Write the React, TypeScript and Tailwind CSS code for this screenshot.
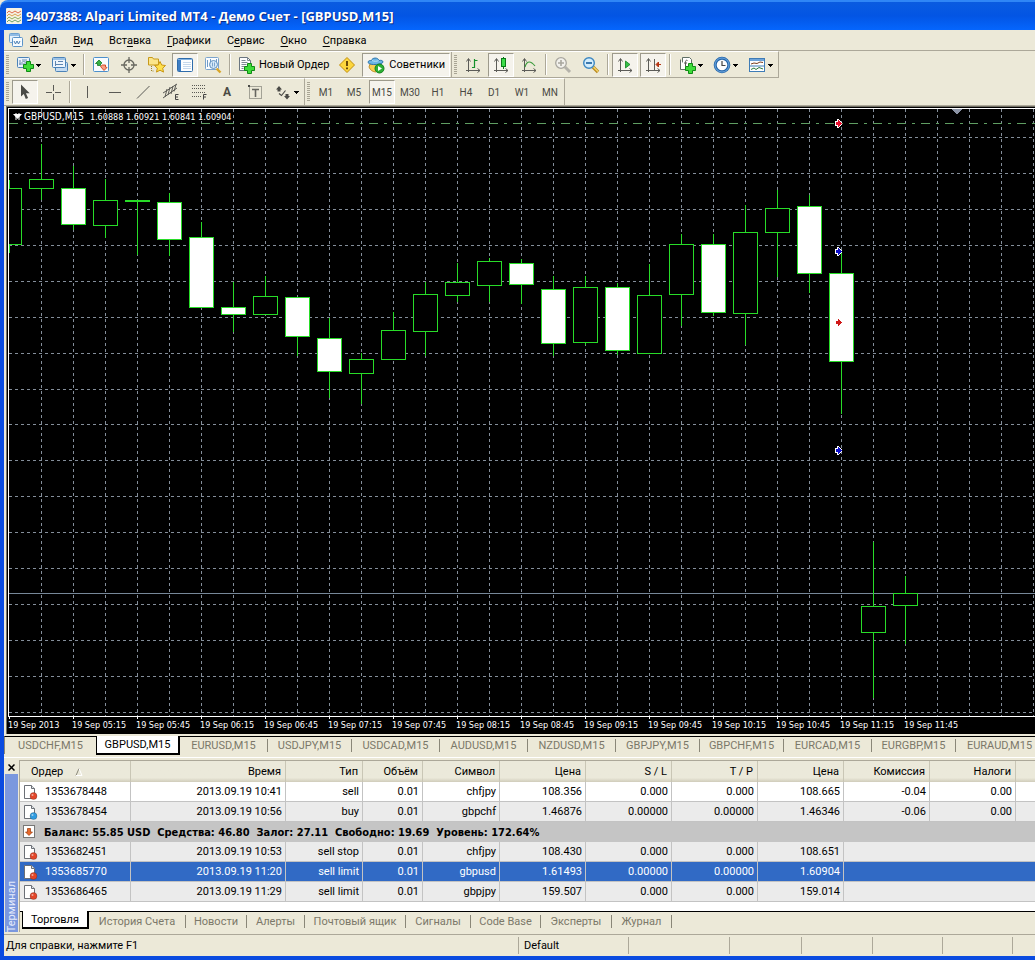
import React from "react";

type Kids = { children?: React.ReactNode };

/* ---------- small building blocks ---------- */

function Glyph({ children, w = 18 }: Kids & { w?: number }) {
  return (
    <svg width={w} height={18} viewBox={`0 0 ${w} 18`} aria-hidden="true" className="shrink-0">
      {children}
    </svg>
  );
}

function Caret() {
  return (
    <svg width={6} height={18} viewBox="0 0 6 18" aria-hidden="true" className="shrink-0" shapeRendering="crispEdges">
      <path d="M0 8h5v1h-1v1h-1v1h-1v-1h-1v-1h-1z" fill="#000" />
    </svg>
  );
}

function Sep() {
  return (
    <span className="flex w-1.5 shrink-0 justify-center self-stretch py-0.5">
      <span className="w-px bg-[#aca899]" />
      <span className="w-px bg-white" />
    </span>
  );
}

function Grip() {
  return (
    <svg width={7} height={20} className="shrink-0" aria-hidden="true" shapeRendering="crispEdges">
      {Array.from({ length: 10 }, (_, i) => (
        <rect key={i} x={2} y={i * 2} width={3} height={1} fill="#a9a594" />
      ))}
    </svg>
  );
}

function Tool({
  label,
  children,
  pressed,
  wide,
  drop,
}: Kids & { label: string; pressed?: boolean; wide?: boolean; drop?: boolean }) {
  const face = pressed
    ? "border-t-[#9d9a8c] border-l-[#9d9a8c] border-r-white border-b-white bg-[#f5f3ec]"
    : "border-transparent";
  const pad = pressed ? "px-1 gap-1" : "px-0.5 gap-1";
  const size = wide ? pad : drop ? "w-[33px] gap-0.5" : "w-[26px]";
  return (
    <button
      aria-label={label}
      className={`mx-px flex h-6 shrink-0 items-center justify-center border ${face} ${size}`}
    >
      {children}
      {drop && <Caret />}
    </button>
  );
}

const Plus = ({ x, y }: { x: number; y: number }) => (
  <path
    d={`M${x + 3} ${y}h4v3h3v4h-3v3h-4v-3h-3v-4h3z`}
    fill="#3fdc3a"
    stroke="#0f8a14"
    strokeWidth={1}
    transform="translate(.5 .5)"
  />
);

/* ---------- toolbar icons ---------- */

const IconNewChart = () => (
  <Glyph>
    <rect x="1.5" y="1.500" width="12" height="10" rx="1" fill="#eaf3fc" stroke="#4c83b8" />
    <path d="M4 4v5M3 8h8M6 4h5M5.500 6.500l2-1 3 1" stroke="#6c8db0" fill="none" />
    <Plus x={7} y={5} />
  </Glyph>
);
const IconProfiles = () => (
  <Glyph>
    <rect x="4.500" y="6.500" width="12" height="9" rx="1" fill="#c5dcf2" stroke="#4c83b8" />
    <rect x="1.500" y="1.500" width="13" height="10" rx="1" fill="#eef5fc" stroke="#4c83b8" />
    <path d="M2 3h12" stroke="#9cc2e6" strokeWidth="2" />
    <path d="M4.500 5v5M4 8.500h8M7 5.500h5" stroke="#5f86b0" fill="none" />
  </Glyph>
);
const IconMarket = () => (
  <Glyph>
    <rect x="1.500" y="1.500" width="15" height="14" rx="1" fill="#f8fcff" stroke="#4c90cc" />
    <path d="M3.500 7.500l3.500-3.500 3 3-1.500 1v1.500h-3v-2z" fill="#35b045" stroke="#127a22" strokeWidth=".8" />
    <path d="M8.500 10.500l2-1.500h3v2l1.500.5-3 3z" fill="#f7a184" stroke="#d0401d" strokeWidth=".9" />
  </Glyph>
);
const IconTarget = () => (
  <Glyph>
    <circle cx="9" cy="9" r="5" fill="none" stroke="#686860" strokeWidth="1.300" />
    <path d="M9 1v6M9 11v6M1 9h6M11 9h6" stroke="#686860" strokeWidth="1.300" />
  </Glyph>
);
const IconFavorites = () => (
  <Glyph>
    <path d="M.5 1.500h4l1 1.500h5v6h-10z" fill="#fbe58a" stroke="#c79a1c" />
    <path d="M3.500 10v5h3" stroke="#a08428" strokeDasharray="1 1" fill="none" />
    <path d="M12 5.500l1.700 3.500 3.800.5-2.800 2.700.8 3.900-3.500-1.900-3.500 1.900.8-3.900-2.800-2.700 3.800-.5z" fill="#ffe14d" stroke="#c99612" />
  </Glyph>
);
const IconNavigator = () => (
  <Glyph>
    <rect x="1.500" y="2.500" width="15" height="13" rx="1" fill="#fdfeff" stroke="#2f6cab" />
    <path d="M2 3.500h14" stroke="#86b4e2" />
    <rect x="2" y="4" width="3" height="11" fill="#3f7ec4" />
    <path d="M7 6.500h8M7 8.500h8M7 10.500h8M7 12.500h8" stroke="#c6d8ec" />
  </Glyph>
);
const IconTester = () => (
  <Glyph>
    <rect x="1.500" y="1.500" width="13" height="12" rx="1" fill="#fbfdff" stroke="#7ba4cc" />
    <path d="M3.500 4v7M6.500 3v7M12.500 3v4" stroke="#6f9bc8" />
    <path d="M12.500 12.500l4 4" stroke="#d8a528" strokeWidth="2.400" />
    <circle cx="9.500" cy="8.500" r="4" fill="#cfe6f8" fillOpacity=".85" stroke="#5f8fbd" />
    <path d="M8.500 6.500v4M10.500 6.500v4" stroke="#7ba4cc" />
  </Glyph>
);
const IconOrder = () => (
  <Glyph>
    <path d="M2.500 1.500h8l3 3v10h-11z" fill="#fdfdfd" stroke="#6b7680" />
    <path d="M10.500 1.500v3h3M4.500 4.500h4M4.500 6.500h6M4.500 8.500h5M4.500 10.500h3M4.500 12.500h2" stroke="#7f8a94" fill="none" />
    <Plus x={7} y={7} />
  </Glyph>
);
const IconWarning = () => (
  <Glyph>
    <path d="M9 1.500l7.500 7.500-7.500 7.500-7.500-7.500z" fill="#fcd63c" stroke="#c18e0c" strokeLinejoin="round" />
    <path d="M9 5v5M9 11.500v1.800" stroke="#5a3a00" strokeWidth="1.800" />
  </Glyph>
);
const IconExperts = () => (
  <Glyph>
    <path d="M3 8l-1 3c1 3 4 5 7 5l5-6-2-3z" fill="#f8cf52" stroke="#c3922c" />
    <path d="M1 6.500c0-2 2-2 3.500-2C5 1.500 11 1 12 4.500c2-.5 4 0 4 1.500 0 2.500-13 4-15 .5z" fill="#6bb5e6" stroke="#2c74ac" />
    <path d="M5 4.500c2 1 5 1 6.500 0" stroke="#b8e0f8" fill="none" />
    <circle cx="12.500" cy="12.500" r="4.500" fill="#2cb034" stroke="#12801c" />
    <path d="M11 10l4 2.500-4 2.500z" fill="#fff" />
  </Glyph>
);
const Axes = () => (
  <path d="M4.500 3v13M2.500 5.500l2-3 2 3M2 14.500h14M13.500 12.500l2.500 2-2.500 2" stroke="#5c5c58" fill="none" />
);
const IconBars = () => (
  <Glyph>
    <Axes />
    <path d="M10.500 3v9M8 11.500h2.500M10.500 4.500h3" stroke="#14902a" strokeWidth="1.200" fill="none" />
  </Glyph>
);
const IconCandles = () => (
  <Glyph>
    <Axes />
    <path d="M11.500 1v12" stroke="#0a7a18" />
    <rect x="9.500" y="2.500" width="4" height="8" fill="#3ddc4a" stroke="#0a7a18" />
  </Glyph>
);
const IconLine = () => (
  <Glyph>
    <Axes />
    <path d="M5 11c2-7 6-6 10-1" stroke="#3a9a3a" strokeWidth="1.200" fill="none" />
  </Glyph>
);
const IconZoomIn = () => (
  <Glyph>
    <path d="M11 11l5 5" stroke="#b4b2aa" strokeWidth="3" />
    <circle cx="7" cy="7" r="5.300" fill="#f2f1ec" stroke="#a9a79f" strokeWidth="1.300" />
    <path d="M4 7h6M7 4v6" stroke="#a9a79f" strokeWidth="1.600" />
  </Glyph>
);
const IconZoomOut = () => (
  <Glyph>
    <path d="M11 11l5 5" stroke="#b98a20" strokeWidth="3.400" />
    <path d="M11.500 11l4.500 4.500" stroke="#f5d468" strokeWidth="1.600" />
    <circle cx="7" cy="7" r="5.300" fill="#d3edfc" stroke="#3d87c0" strokeWidth="1.400" />
    <path d="M4 7h6" stroke="#2a6ca6" strokeWidth="1.800" />
  </Glyph>
);
const IconScroll = () => (
  <Glyph>
    <Axes />
    <path d="M9.500 5l4.500 3.500-4.500 3.500z" fill="#35c046" stroke="#128020" strokeWidth=".8" />
  </Glyph>
);
const IconShift = () => (
  <Glyph>
    <Axes />
    <path d="M10.500 3v11" stroke="#5c5c58" />
    <path d="M17 8.500h-4M14.500 6l-2.500 2.500 2.500 2.500z" stroke="#b63412" fill="#b63412" />
  </Glyph>
);
const IconIndicators = () => (
  <Glyph>
    <path d="M4.500 1.500h7l2 2v8h-9z" fill="#fff" stroke="#5f6f66" />
    <path d="M2.500 3.500v10h7" fill="#fff" stroke="#5f6f66" />
    <path d="M9.500 4.500c-2-1-2 1-2 2v4M6 7h3" stroke="#555" fill="none" />
    <Plus x={7} y={7} />
  </Glyph>
);
const IconPeriods = () => (
  <Glyph>
    <circle cx="9" cy="9" r="6.800" fill="#fdfdfd" stroke="#2768ac" strokeWidth="3" />
    <circle cx="9" cy="9" r="7" fill="none" stroke="#7fb6ea" strokeWidth=".8" />
    <path d="M9 5v4.500h3.500" stroke="#444" fill="none" strokeWidth="1.200" />
  </Glyph>
);
const IconTemplates = () => (
  <Glyph>
    <rect x="1.500" y="2.500" width="15" height="13" fill="#fff" stroke="#3f7cb6" />
    <path d="M2 4h14" stroke="#6ea4da" strokeWidth="2" />
    <path d="M2 10h14" stroke="#3f7cb6" />
    <path d="M3 8l3-1 3 .5 3-1.500 3 .5" stroke="#7a3e20" fill="none" />
    <path d="M3 13.500l3-1.500 2 1.500 3-2 4 1.500" stroke="#2d7a3c" fill="none" />
  </Glyph>
);

const IconCursor = () => (
  <Glyph>
    <path d="M5 1.500v12l2.800-2.500 2 5 2.300-1-2.200-4.700h3.800z" fill="#4a4a46" />
  </Glyph>
);
const IconCross = () => (
  <Glyph>
    <path d="M9.500 2v6M9.500 11v6M2 9.500h6M11 9.500h6" stroke="#5a5a55" />
  </Glyph>
);
const IconV = () => (
  <Glyph>
    <path d="M9.500 3v12" stroke="#5a5a55" />
  </Glyph>
);
const IconH = () => (
  <Glyph>
    <path d="M3 9.500h12" stroke="#5a5a55" />
  </Glyph>
);
const IconTrend = () => (
  <Glyph>
    <path d="M3 15.500L15.500 3" stroke="#5a5a55" />
  </Glyph>
);
const IconChannel = () => (
  <Glyph>
    <path d="M1 10L15 1M1 15L15 5M5 6l-2 8M8 4l-2 8M11 3l-2 8M14 1.500l-2 7" stroke="#5a5a55" />
    <path d="M16.500 11.500h-3v5h3M13.500 14h2.500" stroke="#444" fill="none" />
  </Glyph>
);
const IconFibo = () => (
  <Glyph>
    <path d="M2 2.500h14M2 5.500h14M2 9.500h14M2 13.500h10" stroke="#5a5a55" strokeDasharray="1 1" />
    <path d="M16.500 11.500h-3v5M13.500 14h2.500" stroke="#444" fill="none" />
  </Glyph>
);
const IconLabel = () => (
  <Glyph>
    <rect x="3.500" y="3.500" width="12" height="12" fill="none" stroke="#5a5a55" strokeDasharray="1 1" />
    <rect x="2" y="2" width="2" height="2" fill="#4a4a46" />
    <path d="M6 6.500h7M9.500 6v8" stroke="#66665f" strokeWidth="1.600" />
  </Glyph>
);
const IconArrows = () => (
  <Glyph>
    <path d="M5 3l3 3.500h-1.500v2h-3v-2h-1.500z" fill="#4a4a46" />
    <path d="M13 16.500l-3-3.500h1.500v-2h3v2h1.500z" fill="#4a4a46" />
    <path d="M5 10.500l2.500 2 4-5" stroke="#4a4a46" strokeWidth="1.200" fill="none" />
  </Glyph>
);

/* ---------- price chart ---------- */

type Candle = [x: number, high: number, top: number, bottom: number, low: number, filled: 0 | 1];

const candles: Candle[] = [
  [9, 180, 188, 244, 253, 0],
  [41, 144, 179, 188, 200, 0],
  [73, 166, 188, 224, 230, 1],
  [105, 179, 200, 225, 238, 0],
  [137, 200, 200, 201, 255, 0],
  [169, 193, 202, 239, 256, 1],
  [201, 222, 237, 307, 307, 1],
  [233, 282, 307, 314, 332, 1],
  [265, 276, 296, 314, 314, 0],
  [297, 297, 297, 336, 356, 1],
  [329, 318, 338, 371, 398, 1],
  [361, 353, 359, 373, 404, 0],
  [393, 312, 330, 359, 359, 0],
  [425, 282, 294, 331, 356, 0],
  [457, 263, 282, 295, 302, 0],
  [489, 258, 261, 285, 302, 0],
  [521, 259, 263, 284, 304, 1],
  [553, 276, 289, 343, 356, 1],
  [585, 276, 287, 342, 345, 0],
  [617, 283, 287, 350, 355, 1],
  [649, 264, 295, 353, 353, 0],
  [681, 234, 244, 294, 326, 0],
  [713, 234, 244, 312, 316, 1],
  [745, 205, 232, 313, 345, 0],
  [777, 190, 208, 232, 277, 0],
  [809, 195, 206, 273, 293, 1],
  [841, 250, 273, 361, 414, 1],
  [873, 542, 606, 632, 698, 0],
  [905, 576, 593, 605, 644, 0],
];

const gridY = [137, 173, 209, 245, 281, 317, 353, 389, 424, 460, 496, 532, 568, 604, 640, 676, 712];
const gridX = Array.from({ length: 80 }, (_, i) => 41 + i * 32);

function Marker({ x, y, color }: { x: number; y: number; color: string }) {
  return (
    <g transform={`translate(${x} ${y})`}>
      <path d="M-3 -2h2v-2h2v1h1v1h1v1h1v3h-1v1h-1v1h-1v1h-2v-2h-2z" fill="#fff" />
      <path d="M-2 -1h2v-2h1v1h1v1h1v1h1v1h-1v1h-1v1h-1v1h-1v-2h-2z" fill={color} />
    </g>
  );
}

function Chart() {
  return (
    <svg width="100%" height={607} className="block" role="img" aria-label="GBPUSD M15">
      <g transform="translate(-9 -109)" shapeRendering="crispEdges">
        {gridY.map((y) => (
          <line key={y} x1={9} x2={2600} y1={y + 0.5} y2={y + 0.5} stroke="#848e9a" strokeDasharray="3 3" />
        ))}
        {gridX.map((x) => (
          <line key={x} x1={x + 0.5} x2={x + 0.5} y1={109} y2={716} stroke="#848e9a" strokeDasharray="3 3" />
        ))}
        <line x1={9} x2={2600} y1={123.5} y2={123.5} stroke="#5f9e62" strokeDasharray="9 6 3 6" />
        <line x1={9} x2={2600} y1={593.5} y2={593.5} stroke="#778899" />
        {candles.map(([x, hi, top, bot, lo, filled]) => (
          <g key={x} fill="#28dc28">
            <rect x={x} y={hi} width={1} height={lo - hi} />
            <rect x={x - 12} y={top} width={25} height={bot - top + 1} />
            {bot - top > 1 && (
              <rect x={x - 11} y={top + 1} width={23} height={bot - top - 1} fill={filled ? "#fff" : "#000"} />
            )}
          </g>
        ))}
        <path d="M951 109h11l-5.500 5.500z" fill="#8b93a5" />
        <Marker x={838} y={123} color="#e8102e" />
        <Marker x={838} y={251} color="#1010c8" />
        <Marker x={838} y={322} color="#d01818" />
        <Marker x={838} y={450} color="#1010c8" />
      </g>
    </svg>
  );
}

const times = [
  "19 Sep 2013", "19 Sep 05:15", "19 Sep 05:45", "19 Sep 06:15", "19 Sep 06:45",
  "19 Sep 07:15", "19 Sep 07:45", "19 Sep 08:15", "19 Sep 08:45", "19 Sep 09:15",
  "19 Sep 09:45", "19 Sep 10:15", "19 Sep 10:45", "19 Sep 11:15", "19 Sep 11:45",
];

/* ---------- terminal data ---------- */

type Order = { id: string; color: string; tone: string; cells: string[] };

const openOrders: Order[] = [
  { id: "1353678448", color: "#e2472a", tone: "bg-white", cells: ["2013.09.19 10:41", "sell", "0.01", "chfjpy", "108.356", "0.000", "0.000", "108.665", "-0.04", "0.00"] },
  { id: "1353678454", color: "#2f9be0", tone: "bg-[#ebebeb]", cells: ["2013.09.19 10:56", "buy", "0.01", "gbpchf", "1.46876", "0.00000", "0.00000", "1.46346", "-0.06", "0.00"] },
];
const pendingOrders: Order[] = [
  { id: "1353682451", color: "#e2472a", tone: "bg-[#ebebeb]", cells: ["2013.09.19 10:53", "sell stop", "0.01", "chfjpy", "108.430", "0.000", "0.000", "108.651"] },
  { id: "1353685770", color: "#e2472a", tone: "bg-[#316ac5] text-white", cells: ["2013.09.19 11:20", "sell limit", "0.01", "gbpusd", "1.61493", "0.00000", "0.00000", "1.60904"] },
  { id: "1353686465", color: "#e2472a", tone: "bg-[#ebebeb]", cells: ["2013.09.19 11:29", "sell limit", "0.01", "gbpjpy", "159.507", "0.000", "0.000", "159.014"] },
];
const headers = ["Время", "Тип", "Объём", "Символ", "Цена", "S / L", "T / P", "Цена", "Комиссия", "Налоги"];

function OrderRow({ order }: { order: Order }) {
  const rest = 11 - order.cells.length;
  return (
    <tr className={`h-5 ${order.tone}`}>
      <td className="border-r border-b border-[#c3c3c3] p-0">
        <span className="flex items-center gap-[7px] pl-[3px]">
          <svg width={15} height={16} viewBox="0 0 15 16" aria-hidden="true">
            <path d="M1.500 1.500h7l3 3v10h-10z" fill="#fff" stroke="#6b6f76" />
            <path d="M8.500 1.500v3h3" fill="#dfe3e8" stroke="#6b6f76" />
            <circle cx="10.500" cy="12" r="3.500" fill={order.color} stroke="#00000055" strokeWidth=".6" />
            <circle cx="9.500" cy="11" r="1" fill="#ffffff88" />
          </svg>
          {order.id}
        </span>
      </td>
      {order.cells.map((c, i) => (
        <td key={i} className="border-r border-b border-[#c3c3c3] py-0 pr-[3px] pl-0 text-right">
          {c}
        </td>
      ))}
      <td colSpan={rest} className="border-b border-[#c3c3c3] p-0" />
    </tr>
  );
}

/* ---------- static lists ---------- */

const menu: [string, string, string][] = [
  ["", "Ф", "айл"],
  ["", "В", "ид"],
  ["Вст", "а", "вка"],
  ["", "Г", "рафики"],
  ["С", "е", "рвис"],
  ["", "О", "кно"],
  ["", "С", "правка"],
];
const frames = ["M1", "M5", "M15", "M30", "H1", "H4", "D1", "W1", "MN"];
const chartTabs: [string, string][] = [
  ["EURUSD,M15", "w-[88px]"],
  ["USDJPY,M15", "w-[84px]"],
  ["USDCAD,M15", "w-[88px]"],
  ["AUDUSD,M15", "w-[88px]"],
  ["NZDUSD,M15", "w-[88px]"],
  ["GBPJPY,M15", "w-[84px]"],
  ["GBPCHF,M15", "w-[84px]"],
  ["EURCAD,M15", "w-[88px]"],
  ["EURGBP,M15", "w-[84px]"],
  ["EURAUD,M15", "w-[88px]"],
];
const terminalTabs: [string, string][] = [
  ["История Счета", "w-[97px]"],
  ["Новости", "w-[61px]"],
  ["Алерты", "w-[58px]"],
  ["Почтовый ящик", "w-[101px]"],
  ["Сигналы", "w-[65px]"],
  ["Code Base", "w-[70px]"],
  ["Эксперты", "w-[71px]"],
  ["Журнал", "w-[60px]"],
];

function Tab({ text, width }: { text: string; width: string }) {
  return (
    <button className={`flex h-[17px] shrink-0 items-center justify-center whitespace-nowrap text-[#7b7869] ${width}`}>
      <span className="flex-1 text-center">{text}</span>
      <span className="h-[13px] w-px bg-[#8a8778]" />
    </button>
  );
}

export default function App() {
  return (
    <div className="flex min-h-screen flex-col overflow-hidden bg-[#ece9d8] text-[11px] leading-[13px] text-black [font-family:Roboto,'DejaVu_Sans_Condensed',sans-serif]">
      <header className="flex h-[30px] items-center gap-1 rounded-tl-lg border-t-2 border-[#2f86f6] bg-linear-to-b from-[#0a5be0] via-[#0355e4] to-[#0566fe] pl-1.5">
        <svg width={16} height={16} viewBox="0 0 16 16" aria-hidden="true">
          <rect width="16" height="16" rx="1" fill="#f6f2e4" />
          <path d="M1 5l2-2 3 2 3-2 3 2 3-2" stroke="#e06a4a" fill="none" />
          <path d="M1 8l2-2 3 2 3-2 3 2 3-2" stroke="#d8a050" fill="none" />
          <path d="M1 11l2-2 3 2 3-2 3 2 3-2" stroke="#8cae5c" fill="none" />
          <path d="M1 14l2-2 3 2 3-2 3 2 3-2" stroke="#6aa36a" fill="none" />
        </svg>
        <h1 className="text-[13px] leading-4 font-bold whitespace-nowrap text-white [font-family:'Open_Sans','Noto_Sans',sans-serif] [text-shadow:1px_1px_0_#0a2a80]">
          9407388: Alpari Limited MT4 - Демо Счет - [GBPUSD,M15]
        </h1>
      </header>

      <div className="flex flex-1 flex-col border-b-4 border-l-4 border-[#0a4be0]">
        <nav className="flex h-5 items-center gap-4 pl-1">
          <svg width={16} height={16} viewBox="0 0 16 16" aria-hidden="true" className="-mr-2.5">
            <rect x="1.500" y="1.500" width="10" height="9" rx="1" fill="#e6f1fb" stroke="#6ca0d0" />
            <path d="M2 3h9" stroke="#8fbbe4" strokeWidth="2" />
            <rect x="4.500" y="5.500" width="10" height="9" rx="1" fill="#f6fbff" stroke="#5b93c8" />
            <path d="M6 9l1.500 3 1.500-3 1.500 3 1.500-3" stroke="#4a7fb4" fill="none" />
          </svg>
          {menu.map(([a, u, b]) => (
            <button key={a + u + b}>
              {a}
              <span className="underline underline-offset-2">{u}</span>
              {b}
            </button>
          ))}
        </nav>

        <div className="flex border-t border-[#aca899]">
          <div className="flex h-[27px] items-center border-t border-r border-b border-t-white border-r-[#aca899] border-b-[#aca899]">
            <Grip />
            <Tool label="Новый график" drop><IconNewChart /></Tool>
            <Tool label="Профили" drop><IconProfiles /></Tool>
            <Sep />
            <Tool label="Обзор рынка"><IconMarket /></Tool>
            <Tool label="Окно данных"><IconTarget /></Tool>
            <Tool label="Избранное"><IconFavorites /></Tool>
            <Tool label="Навигатор" pressed><IconNavigator /></Tool>
            <Tool label="Тестер стратегий"><IconTester /></Tool>
            <Sep />
            <Tool label="Новый Ордер" wide><IconOrder />Новый Ордер</Tool>
            <Tool label="Редактор"><IconWarning /></Tool>
            <Tool label="Советники" wide pressed><IconExperts />Советники</Tool>
            <span className="w-px self-stretch bg-[#aca899]" />
            <Grip />
            <Tool label="Бары"><IconBars /></Tool>
            <Tool label="Японские свечи" pressed><IconCandles /></Tool>
            <Tool label="Линия"><IconLine /></Tool>
            <Sep />
            <Tool label="Увеличить"><IconZoomIn /></Tool>
            <Tool label="Уменьшить"><IconZoomOut /></Tool>
            <Sep />
            <Tool label="Автопрокрутка" pressed><IconScroll /></Tool>
            <Tool label="Сдвиг графика" pressed><IconShift /></Tool>
            <Sep />
            <Tool label="Индикаторы" drop><IconIndicators /></Tool>
            <Tool label="Периоды" drop><IconPeriods /></Tool>
            <Tool label="Шаблоны" drop><IconTemplates /></Tool>
          </div>
        </div>
        <div className="flex border-b border-[#aca899] text-[10px] text-[#4a4a44]">
          <div className="flex h-[27px] items-center border-t border-r border-t-white border-r-[#aca899]">
            <Grip />
            <Tool label="Курсор" pressed><IconCursor /></Tool>
            <Tool label="Перекрестие"><IconCross /></Tool>
            <Sep />
            <Tool label="Вертикальная линия"><IconV /></Tool>
            <Tool label="Горизонтальная линия"><IconH /></Tool>
            <Tool label="Трендовая линия"><IconTrend /></Tool>
            <Tool label="Канал"><IconChannel /></Tool>
            <Tool label="Фибоначчи"><IconFibo /></Tool>
            <Tool label="Текст"><b className="text-xs">A</b></Tool>
            <Tool label="Метка"><IconLabel /></Tool>
            <Tool label="Стрелки" drop><IconArrows /></Tool>
          </div>
          <div className="flex h-[27px] items-center border-t border-r border-t-white border-r-[#aca899]">
            <Grip />
            {frames.map((f) => (
              <Tool key={f} label={f} pressed={f === "M15"}>{f}</Tool>
            ))}
          </div>
        </div>

        <main className="ml-0.5 border-t border-l border-[#716f64]">
          <div className="border-t border-l border-black bg-black text-[9px] leading-3 text-white [font-family:'DejaVu_Sans_Condensed','DejaVu_Sans',sans-serif]">
            <div className="relative overflow-hidden border-t border-b border-l border-white">
              <Chart />
              <div className="absolute top-0.5 left-1 flex items-center gap-0.5">
                <svg width={9} height={8} viewBox="0 0 9 8" aria-hidden="true">
                  <path d="M0 1h9l-4.500 5z" fill="#fff" />
                  <path d="M3 0v7M6 0v7" stroke="#fff" />
                </svg>
                <span className="mr-1 text-[10px]">GBPUSD,M15</span>
                <span>1.60888 1.60921 1.60841 1.60904</span>
              </div>
            </div>
            <ol className="flex h-[17px] overflow-hidden">
              {times.map((t) => (
                <li key={t} className="w-16 shrink-0 whitespace-nowrap">
                  <span className="ml-px block h-0.5 w-px bg-white" />
                  {t}
                </li>
              ))}
            </ol>
          </div>
        </main>

        <div className="flex h-6 items-start overflow-hidden border-b border-white pt-0.5">
          <div className="flex h-[18px] w-[92px] shrink-0 items-center justify-center border-t border-l border-t-black border-l-[#8a8778] text-[#7b7869]">
            <button>USDCHF,M15</button>
          </div>
          <button className="flex h-[19px] w-[84px] shrink-0 items-center justify-center border-r-2 border-b-2 border-l border-black bg-white">
            GBPUSD,M15
          </button>
          <div className="flex h-[18px] flex-1 items-center border-t border-black">
            {chartTabs.map(([t, w]) => (
              <Tab key={t} text={t} width={w} />
            ))}
          </div>
        </div>

        <section className="mt-0.5 flex">
          <aside className="flex w-[15px] shrink-0 flex-col items-center">
            <button aria-label="Закрыть" className="flex h-[14px] items-center">
              <svg width={7} height={7} viewBox="0 0 7 7" aria-hidden="true">
                <path d="M.5.5l6 6M6.500.5l-6 6" stroke="#000" strokeWidth="1.500" />
              </svg>
            </button>
            <div className="flex w-[13px] flex-1 items-center justify-start bg-[#7b98de] py-0.5 text-[#e6ecfb] [writing-mode:sideways-lr]">
              Терминал
            </div>
          </aside>
          <div className="flex min-w-0 flex-1 flex-col overflow-hidden border-t border-l border-[#aca899]">
            <table className="w-full table-fixed border-separate border-spacing-0 bg-white">
              <colgroup>
                <col className="w-[111px]" />
                <col className="w-[155px]" />
                <col className="w-[77px]" />
                <col className="w-[60px]" />
                <col className="w-[77px]" />
                <col className="w-[86px]" />
                <col className="w-[86px]" />
                <col className="w-[86px]" />
                <col className="w-[86px]" />
                <col className="w-[86px]" />
                <col className="w-[86px]" />
                <col />
              </colgroup>
              <thead>
                <tr className="h-[21px] bg-linear-to-b from-[#ebe9da] from-80% to-[#d0ccba]">
                  <th className="border-r border-[#c9c6b5] py-0 pl-[11px] text-left font-normal">
                    <span className="flex items-center gap-3">
                      Ордер
                      <svg width={8} height={8} viewBox="0 0 8 8" aria-hidden="true">
                        <path d="M1 7.500L4 .5" stroke="#8a8778" fill="none" />
                        <path d="M4 .5l3 7h-6" stroke="#fff" fill="none" />
                      </svg>
                    </span>
                  </th>
                  {headers.map((h, i) => (
                    <th key={i} className="border-r border-[#c9c6b5] py-0 pr-1 pl-0 text-right font-normal">
                      {h}
                    </th>
                  ))}
                  <th className="p-0" />
                </tr>
              </thead>
              <tbody>
                {openOrders.map((o) => (
                  <OrderRow key={o.id} order={o} />
                ))}
                <tr className="h-5 bg-[#c5c5c5]">
                  <td colSpan={12} className="p-0">
                    <span className="flex items-center gap-2 pl-[3px]">
                      <svg width={13} height={14} viewBox="0 0 13 14" aria-hidden="true">
                        <rect x=".5" y=".5" width="11" height="12" fill="#fff" stroke="#777" />
                        <path d="M6 10.500l-3.500-3.500h2v-3.500h3v3.500h2z" fill="#e86a2c" stroke="#9a3608" strokeWidth=".7" />
                      </svg>
                      <b className="whitespace-pre [font-family:'DejaVu_Sans_Condensed','DejaVu_Sans',sans-serif]">
                        {"Баланс: 55.85 USD  Средства: 46.80  Залог: 27.11  Свободно: 19.69  Уровень: 172.64%"}
                      </b>
                    </span>
                  </td>
                </tr>
                {pendingOrders.map((o) => (
                  <OrderRow key={o.id} order={o} />
                ))}
              </tbody>
            </table>
            <div className="h-[9px] bg-white" />
            <div className="flex h-[21px] items-start">
              <span className="w-0.5 self-start border-t border-black pt-px" />
              <button className="flex h-[18px] w-[67px] shrink-0 items-center justify-center border-r-2 border-b-2 border-l border-black bg-white">
                Торговля
              </button>
              <div className="flex h-5 flex-1 items-center border-t border-black">
                {terminalTabs.map(([t, w]) => (
                  <Tab key={t} text={t} width={w} />
                ))}
              </div>
            </div>
          </div>
        </section>

        <footer className="mt-0.5 flex flex-1 items-stretch overflow-hidden border-t border-[#aca899] py-0.5">
          <span className="flex w-[515px] items-center border-r border-[#aca899] pl-0.5">Для справки, нажмите F1</span>
          <span className="flex w-[110px] items-center border-r border-[#aca899] pl-[5px]">Default</span>
          <span className="w-[101px] border-r border-[#aca899]" />
          <span className="w-[72px] border-r border-[#aca899]" />
          <span className="w-[71px] border-r border-[#aca899]" />
          <span className="w-[70px] border-r border-[#aca899]" />
          <span className="w-[70px] border-r border-[#aca899]" />
        </footer>
      </div>
    </div>
  );
}
